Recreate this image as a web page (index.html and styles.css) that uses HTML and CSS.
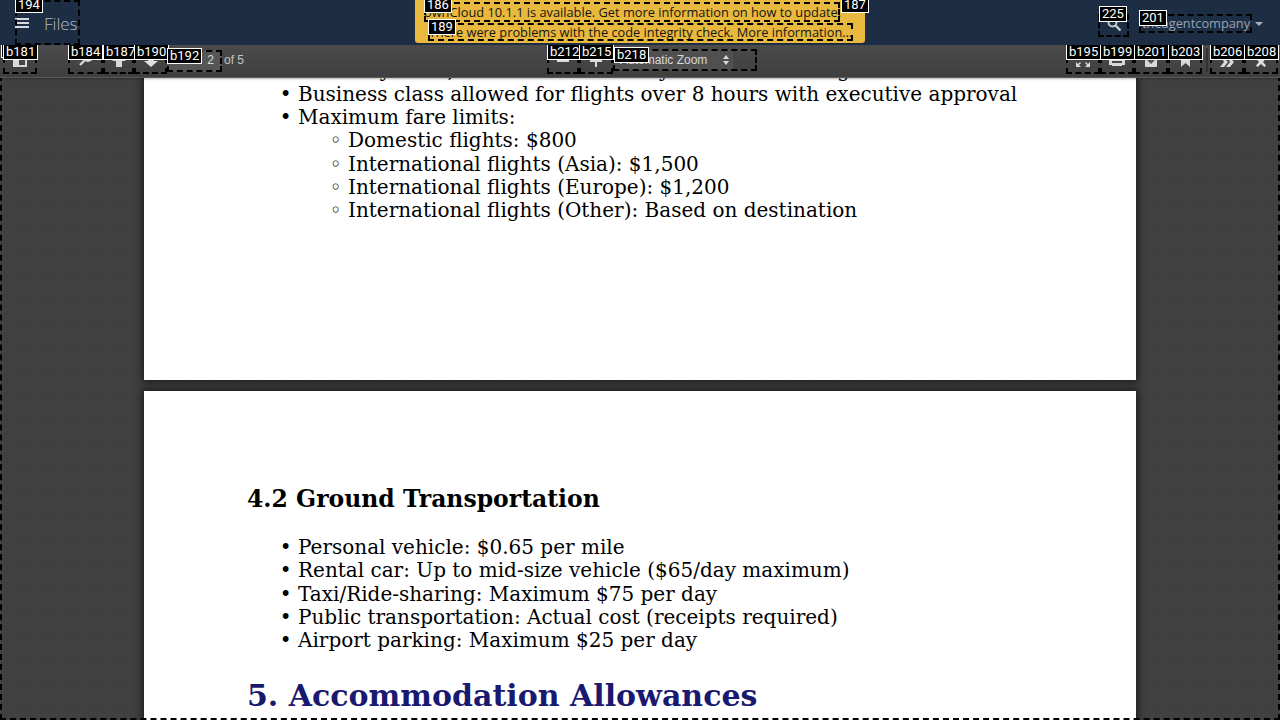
FILE: index.html
```html
<!DOCTYPE html>
<html lang="en">
<head>
  <meta charset="UTF-8" />
  <title>Files - ownCloud</title>
  <link rel="stylesheet" href="styles.css">
</head>
<body>
  <header class="topbar">
    <div class="menu marked">
      <span class="tag tag-menu">194</span>
      <svg class="menu-icon" viewBox="0 0 14 10" width="14" height="10"><path d="M0 0h14v2H0zM0 4h14v2H0zM0 8h14v2H0z" fill="#d5dae0"/></svg>
      <span class="app-name">Files</span>
    </div>
    <div class="notice">
      <div class="notice-row notice-first marked">
        <span class="tag tag-notice">186</span>
        <span>ownCloud 10.1.1 is available. Get more information on how to update.</span>
        <span class="tag tag-close">187</span>
      </div>
      <div class="notice-row notice-second marked">
        <span class="tag">189</span>
        <span>There were problems with the code integrity check. More information…</span>
      </div>
    </div>
    <div class="account">
      <button class="search marked">
        <span class="tag tag-search">225</span>
        <svg viewBox="0 0 14 14" width="14" height="14"><circle cx="5.5" cy="5.5" r="4" fill="none" stroke="#c4cad2" stroke-width="2"/><path d="M8.5 8.5l5 5" stroke="#c4cad2" stroke-width="2.4"/></svg>
      </button>
      <div class="user marked">
        <span class="tag">201</span>
        <span class="user-name">theagentcompany</span>
      </div>
      <span class="caret"></span>
    </div>
  </header>

  <main class="viewer">
    <div class="toolbar">
      <div class="tool-left">
        <span class="tag tag-behind"></span>
        <button class="tool tool-sidebar marked">
          <span class="tag">b181</span>
          <svg viewBox="0 0 14 12" width="14" height="12"><path d="M0 0h14v12H0zM6 2v8h6V2z" fill="#d9d9d9" fill-rule="evenodd"/></svg>
        </button>
        <button class="tool tool-find marked">
          <span class="tag">b184</span>
          <svg viewBox="0 0 16 16" width="16" height="16"><circle cx="10" cy="6" r="4" fill="none" stroke="#d9d9d9" stroke-width="2"/><path d="M7 9l-5 5" stroke="#d9d9d9" stroke-width="2.4"/></svg>
        </button>
        <button class="tool tool-up marked">
          <span class="tag">b187</span>
          <svg viewBox="0 0 16 12" width="16" height="12"><path d="M8 0l7 6h-4v6H5V6H1z" fill="#d9d9d9"/></svg>
        </button>
        <button class="tool tool-down marked">
          <span class="tag">b190</span>
          <svg viewBox="0 0 16 12" width="16" height="12"><path d="M8 12L1 6h4V0h6v6h4z" fill="#e0e0e0"/></svg>
        </button>
        <div class="page-input marked">
          <span class="tag">b192</span>
          <span class="page-num">2</span>
        </div>
        <span class="page-total">of 5</span>
      </div>
      <div class="tool-middle">
        <button class="tool tool-minus marked">
          <span class="tag">b212</span>
          <svg viewBox="0 0 12 12" width="12" height="12"><path d="M0 5h12v2H0z" fill="#d9d9d9"/></svg>
        </button>
        <button class="tool marked">
          <span class="tag">b215</span>
          <svg viewBox="0 0 12 12" width="12" height="12"><path d="M5 0h2v5h5v2H7v5H5V7H0V5h5z" fill="#d9d9d9"/></svg>
        </button>
        <div class="zoom-select marked">
          <span class="tag">b218</span>
          <div class="zoom-box">Automatic Zoom<svg class="arrows" viewBox="0 0 6 10" width="6" height="10"><path d="M3 0l3 4H0zM3 10l3-4H0z" fill="#d9d9d9"/></svg></div>
        </div>
      </div>
      <div class="tool-right">
        <button class="tool marked">
          <span class="tag">b195</span>
          <svg viewBox="0 0 14 14" width="14" height="14"><path d="M0 14V9l2 2 2-2 1 1-2 2 2 2zM14 14V9l-2 2-2-2-1 1 2 2-2 2z" fill="#d9d9d9"/></svg>
        </button>
        <button class="tool marked">
          <span class="tag">b199</span>
          <svg viewBox="0 0 16 14" width="16" height="14"><path d="M0 4h16v8h-3v1H3v-1H0zM3 8v2h10V8z" fill="#d9d9d9" fill-rule="evenodd"/></svg>
        </button>
        <button class="tool marked">
          <span class="tag">b201</span>
          <svg viewBox="0 0 12 14" width="12" height="14"><path d="M0 3h12v10a1 1 0 0 1-1 1H1a1 1 0 0 1-1-1z" fill="#d9d9d9"/><path d="M4.5 3h3v4H10l-4 4-4-4h2.500z" fill="#555"/></svg>
        </button>
        <button class="tool marked">
          <span class="tag">b203</span>
          <svg viewBox="0 0 9 13" width="9" height="13"><path d="M0 0h9v13L4.500 9 0 13z" fill="#d9d9d9"/></svg>
        </button>
        <span class="tool-sep"></span>
        <button class="tool marked">
          <span class="tag">b206</span>
          <svg viewBox="0 0 14 11" width="14" height="11"><path d="M0 11l4-5-1-2h3l2 2-4 5zM6 11l4-5-1-2h3l2 2-4 5z" fill="#d9d9d9"/></svg>
        </button>
        <button class="tool marked">
          <span class="tag">b208</span>
          <svg viewBox="0 0 10 10" width="10" height="10"><path d="M1.500 0L5 3l3.500-3L10 1.500 7 5l3 3.500L8.500 10 5 7l-3.500 3L0 8.500 3 5 0 1.500z" fill="#e0e0e0"/></svg>
        </button>
      </div>
    </div>

    <div class="pages">
      <section class="page page-one">
        <ul class="doc-list">
          <li>Economy class, unless authorized by the travel manager first</li>
          <li>Business class allowed for flights over 8 hours with executive approval</li>
          <li>Maximum fare limits:
            <ul class="doc-sublist">
              <li>Domestic flights: $800</li>
              <li>International flights (Asia): $1,500</li>
              <li>International flights (Europe): $1,200</li>
              <li>International flights (Other): Based on destination</li>
            </ul>
          </li>
        </ul>
      </section>
      <section class="page page-two">
        <h3>4.2 Ground Transportation</h3>
        <ul class="doc-list">
          <li>Personal vehicle: $0.65 per mile</li>
          <li>Rental car: Up to mid-size vehicle ($65/day maximum)</li>
          <li>Taxi/Ride-sharing: Maximum $75 per day</li>
          <li>Public transportation: Actual cost (receipts required)</li>
          <li>Airport parking: Maximum $25 per day</li>
        </ul>
        <h2>5. Accommodation Allowances</h2>
      </section>
    </div>
  </main>
</body>
</html>
```

FILE: styles.css
```css
* { box-sizing: border-box; }
html, body { height: 100%; }
body {
  margin: 0;
  overflow: hidden;
  display: flex;
  flex-direction: column;
  font-family: "Open Sans", sans-serif;
  background: #404040;
}
button { padding: 0; border: 0; background: none; }

/* annotation overlay */
.marked { position: relative; outline: 2px dashed #000; outline-offset: -2px; }
.tag {
  position: absolute;
  top: -4px;
  left: 0;
  z-index: 10;
  padding: 0 2px;
  height: 16px;
  font: 13px/14px Roboto, sans-serif;
  color: #fff;
  background: #000;
  border: 1px solid #fff;
}

/* top bar */
.topbar {
  flex: 0 0 45px;
  display: grid;
  grid-template-columns: 1fr 450px 1fr;
  background: #1d2d44;
}
.menu {
  display: flex;
  align-items: center;
  width: 65px;
  height: 45px;
  margin-left: 15px;
  padding-top: 1px;
}
.menu-icon { flex: none; }
.app-name {
  margin-left: 15px;
  font-size: 17px;
  font-weight: 300;
  color: #b4bbc5;
}
.tag-menu { top: -3px; }
.notice {
  height: 43px;
  padding: 2px 0 0 9px;
  background: #e9b83e;
  border-radius: 0 0 3px 3px;
  font-size: 12.8px;
  line-height: 20px;
  color: #15150f;
  text-align: center;
}
.notice-first { width: 416px; height: 20px; padding-right: 3px; white-space: nowrap; }
.notice-second { width: 425px; height: 18px; margin: 1px 0 0 4px; white-space: nowrap; line-height: 18px; }
.tag-notice { top: -5px; }
.tag-close { left: 417px; top: -5px; }
.account { display: flex; align-items: flex-start; padding: 14px 0 0 233px; }
.search {
  width: 31px;
  height: 23px;
  display: flex;
  justify-content: center;
  align-items: flex-end;
  padding-bottom: 6px;
}
.tag-search { top: -8px; left: 1px; }
.user {
  width: 113px;
  height: 19px;
  margin-left: 10px;
  padding-left: 3px;
  color: #97a2b0;
  font-size: 12.8px;
  line-height: 19px;
  white-space: nowrap;
}
.caret {
  margin: 8px 0 0 3px;
  border-top: 4px solid #a7b0bc;
  border-left: 4px solid transparent;
  border-right: 4px solid transparent;
}

/* pdf viewer */
.viewer {
  position: relative;
  flex: 1;
  min-height: 0;
  display: flex;
  flex-direction: column;
  overflow: hidden;
  outline: 2px dashed #000;
  outline-offset: -2px;
}
.toolbar {
  position: relative;
  z-index: 5;
  flex: 0 0 32px;
  display: flex;
  padding: 1px 2px 0 0;
  color: #d9d9d9;
  font: 12px "Liberation Sans", sans-serif;
  background: linear-gradient(#4b4b4b, #3f3f3f);
  box-shadow: 0 1px 0 #5a5a5a, 0 2px 2px rgba(0, 0, 0, .3);
}
.tool-left { position: relative; display: flex; flex: 0 0 547px; padding-left: 3px; }
.tool-middle { display: flex; }
.tool-right { display: flex; margin-left: auto; }
.tool {
  flex: none;
  width: 34px;
  height: 28px;
  display: flex;
  justify-content: center;
  align-items: flex-end;
  padding-bottom: 7px;
}
.tool-sidebar { margin-right: 31px; }
.tool-find { width: 35px; }
.tool-up { width: 31px; }
.tool-down { width: 33px; }
.tool-minus { width: 32px; }
.tool .tag { top: -2px; }
.tag-behind { top: -4px; left: 1px; width: 20px; }
.page-input {
  flex: none;
  width: 55px;
  height: 22px;
  margin-top: 4px;
  padding-right: 8px;
  text-align: right;
  line-height: 20px;
  background: #565656;
}
.page-num { font-size: 12px; }
.page-input .tag { top: -2px; }
.page-total { margin: 4px 0 0 2px; line-height: 20px; color: #c4c4c4; }
.zoom-select { width: 144px; height: 22px; margin-top: 3px; }
.zoom-box {
  display: flex;
  align-items: center;
  width: 120px;
  height: 21px;
  padding-left: 7px;
  background: #505050;
}
.arrows { margin-left: 16px; }
.zoom-select .tag { top: -2px; left: 1px; }
.tool-sep { width: 2px; height: 24px; margin: 2px 2px 0 4px; background: #333; }

.pages {
  flex: 1;
  min-height: 0;
  padding: 0 144px;
  margin-top: -32px;
  background-color: #404040;
  background-image: repeating-conic-gradient(#3f3f3f 0 25%, #424242 0 50%);
  background-size: 3px 3px;
}
.page {
  background: #fff;
  padding-left: 104px;
  color: #000;
  font: 20px/23.3px "DejaVu Serif", serif;
  box-shadow: 0 0 8px 2px rgba(0, 0, 0, .6);
}
.page-one { height: 335px; padding-top: 14.4px; }
.page-two { height: 340px; margin-top: 11px; padding-top: 93px; }
.doc-list { margin: 0; padding: 0 0 0 50px; list-style-type: "• "; }
.doc-sublist { margin: 0; padding: 0 0 0 50px; list-style-type: "◦ "; }
.page h3 { margin: 0 0 22px -1px; font-size: 23.5px; line-height: 30px; }
.page h2 { margin: 26px 0 0 -1px; font-size: 30px; line-height: 36px; color: #191970; }
```
